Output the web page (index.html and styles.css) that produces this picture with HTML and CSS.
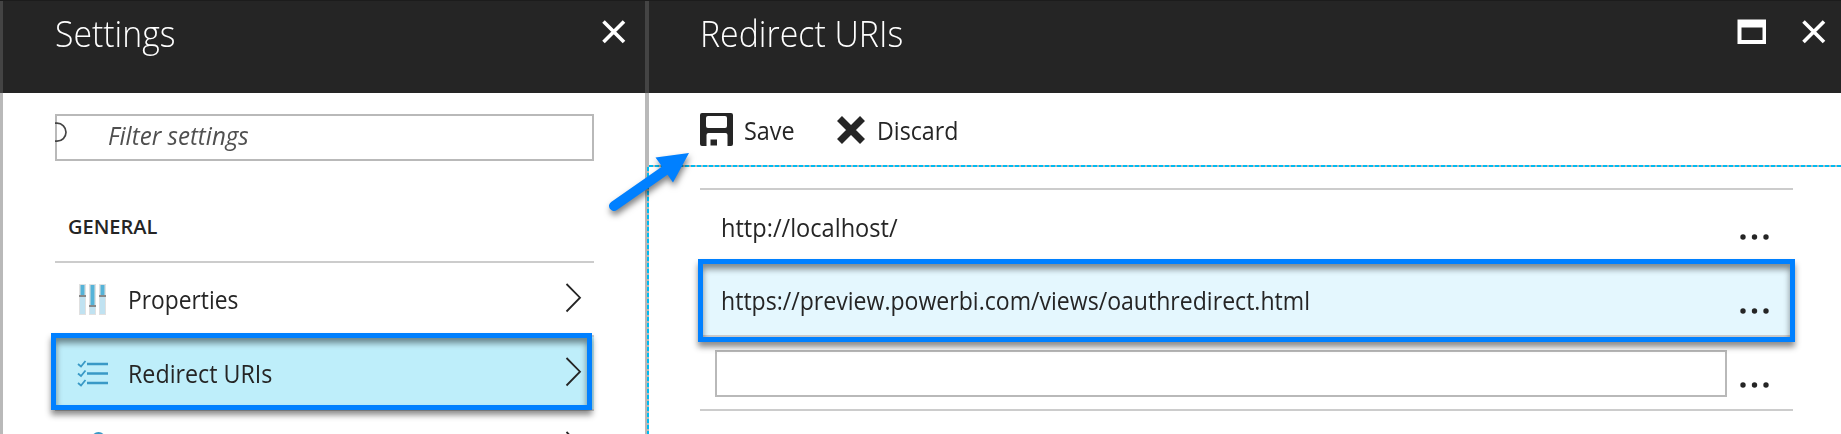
FILE: index.html
```html
<!DOCTYPE html>
<html lang="en">
<head>
<meta charset="utf-8">
<title>Redirect URIs</title>
<link rel="stylesheet" href="styles.css">
</head>
<body>
<div class="portal">
  <section class="blade blade-settings">
    <header class="blade-header">
      <h1 class="title t-settings">Settings</h1>
      <svg class="close" width="26" height="26" viewBox="0 0 26 26"><path d="M2.5 2.5L23 23M23 2.5L2.5 23"/></svg>
    </header>
    <div class="settings-body">
      <div class="filter">
        <svg class="lens" width="14" height="24" viewBox="0 0 14 24"><path d="M0 1.200H2A9 9 0 0 1 2 19.200H0"/></svg>
        <span class="t-filter">Filter settings</span>
      </div>
      <h2 class="group"><span class="t-general">GENERAL</span></h2>
      <div class="item">
        <svg class="icon sliders" width="32" height="32" viewBox="0 0 32 32">
          <path fill="#e0e0e0" d="M2 0h7v31H2zM12 0h7v31h-7zM22 0h7v31h-7z"/>
          <path fill="#c0e2f1" d="M3 13h5v17H3zM13 23h5v7h-5zM23 13h5v17h-5z"/>
          <path fill="#55b3d8" d="M3.500 1h4v11h-4zM13.500 1h4v21h-4zM23.500 1h4v11h-4z"/>
          <path fill="#888" d="M2 11h7v2H2zM12 21h7v2h-7zM22 11h7v2h-7z"/>
        </svg>
        <span class="label t-properties">Properties</span>
        <svg class="chevron" width="17" height="30" viewBox="0 0 17 30"><path d="M1.500 1L15 14.700L1.500 28.500"/></svg>
      </div>
      <div class="item selected">
        <svg class="icon" width="32" height="32" viewBox="0 0 32 32">
          <path class="lines" d="M10 7H31M10 16.500H31M10 26H31"/>
          <path class="checks" d="M1 7L4 9.500L8.500 4M1 16.500L4 19L8.500 13.500M1 26L4 28.500L8.500 23"/>
        </svg>
        <span class="label t-redirect">Redirect URIs</span>
        <svg class="chevron" width="17" height="30" viewBox="0 0 17 30"><path d="M1.500 1L15 14.700L1.500 28.500"/></svg>
      </div>
      <div class="item next">
        <svg class="icon" width="32" height="32" viewBox="0 0 32 32"><circle cx="21.500" cy="8" r="7" fill="#3999c6"/></svg>
        <svg class="chevron" width="17" height="30" viewBox="0 0 17 30"><path d="M1.500 1L15 14.700L1.500 28.500"/></svg>
      </div>
    </div>
  </section>
  <section class="blade blade-uris">
    <header class="blade-header">
      <h1 class="title t-uris">Redirect URIs</h1>
      <svg class="maximize" width="30" height="26" viewBox="0 0 30 26"><path fill-rule="evenodd" d="M.5.5h28.500V25H.5zM4.500 8.500V21h21V8.500z"/></svg>
      <svg class="close" width="26" height="26" viewBox="0 0 26 26"><path d="M2.500 2.500L23 23M23 2.500L2.500 23"/></svg>
    </header>
    <div class="toolbar">
      <svg width="33" height="33" viewBox="0 0 33 33"><path fill="#252525" fill-rule="evenodd" d="M2 0H31Q33 0 33 2V31Q33 33 31 33H27.500V22Q27.500 20 25.500 20H8.500Q6.500 20 6.500 22V33H2Q0 33 0 31V2Q0 0 2 0ZM8 3Q6 3 6 5V13Q6 15 8 15H25Q27 15 27 13V5Q27 3 25 3ZM10.500 26.500H17V32.500H10.500Z"/></svg>
      <span class="t-save">Save</span>
      <svg class="discard" width="28" height="28" viewBox="0 0 28 28"><path d="M2.500 2.500L25.500 25.500M25.500 2.500L2.500 25.500"/></svg>
      <span class="t-discard">Discard</span>
    </div>
    <div class="content">
      <svg class="focus" width="1194" height="270" viewBox="0 0 1194 270"><path class="focus-base" d="M1 270V1H1194"/><path class="focus-dash" d="M1 270V1H1194"/></svg>
      <div class="uris">
        <div class="uri"><span class="t-local">http://localhost/</span><svg class="dots" width="30" height="8"><circle cx="4" cy="4" r="2.700"/><circle cx="15.500" cy="4" r="2.700"/><circle cx="27" cy="4" r="2.700"/></svg></div>
        <div class="uri current"><span class="t-preview">https://preview.powerbi.com/views/oauthredirect.html</span><svg class="dots" width="30" height="8"><circle cx="4" cy="4" r="2.700"/><circle cx="15.500" cy="4" r="2.700"/><circle cx="27" cy="4" r="2.700"/></svg></div>
        <div class="uri entry"><div class="field"></div><svg class="dots" width="30" height="8"><circle cx="4" cy="4" r="2.700"/><circle cx="15.500" cy="4" r="2.700"/><circle cx="27" cy="4" r="2.700"/></svg></div>
      </div>
    </div>
  </section>
  <div class="callout callout-setting"></div>
  <div class="callout callout-uri"></div>
  <svg class="arrow" width="110" height="80" viewBox="0 0 110 80"><path class="shaft" d="M14 66L70 27"/><path class="head" d="M89 13L55.500 17.500L62 26.500L67 34L73 42.500Z"/></svg>
</div>
</body>
</html>
```
FILE: styles.css
```css
* { box-sizing: border-box; }
body { margin: 0; background: #fff; color: #252525; font-family: "Open Sans", "Noto Sans", sans-serif; font-size: 25px; }
svg { display: block; flex: none; }
span, h1 { white-space: nowrap; transform-origin: 0 50%; }
h1, h2 { margin: 0; font-weight: 400; }
/* Condensed text widths */
.t-settings { transform: scaleX(.913); }
.t-uris { transform: scaleX(.915); }
.t-filter { transform: scaleX(.965); }
.t-properties { transform: scaleX(.912); }
.t-redirect { transform: scaleX(.93); }
.t-save { transform: scaleX(.935); }
.t-discard { transform: scaleX(.928); }
.t-local { transform: scaleX(.943); }
.t-preview { transform: scaleX(.923); }
.portal { position: relative; display: flex; width: 1841px; height: 434px; overflow: hidden; }
.blade { height: 434px; border-left: 3px solid #b9b9b9; }
.blade-settings { width: 645px; }
.blade-uris { width: 1196px; border-left-width: 4px; }
.blade-header { display: flex; align-items: flex-start; height: 93px; margin-left: -3px; padding: 18px 18px 0 55px; background: #252525; border-top: 1px solid #1c1c1c; box-shadow: inset 3px 0 #444; color: #fff; }
.blade-uris .blade-header { margin-left: -4px; padding: 18px 14px 0 55px; box-shadow: inset 4px 0 #444; }
.title { margin-right: auto; margin-top: -11px; font-size: 37px; font-weight: 300; line-height: 50px; }
.close path { fill: none; stroke: #fff; stroke-width: 3.6; }
.maximize { margin: 0 34px 0 0; fill: #fff; }
.settings-body { padding: 21px 51px 0 52px; }
.filter { display: flex; align-items: center; height: 47px; border: 2px solid #b9b9b9; color: #505050; font-style: italic; line-height: 40px; }
.filter .t-filter { margin-top: -5px; }
.lens { width: 14px; margin: -8px 39px 0 -2px; }
.lens path { fill: none; stroke: #444; stroke-width: 1.700; }
.group { display: flex; height: 102px; border-bottom: 2px solid #ccc; padding: 52px 0 0 13px; font-size: 20px; font-weight: 600; line-height: 28px; }
.item { display: flex; align-items: center; height: 74px; padding: 0 12px 0 22px; border-bottom: 2px solid #ccc; }
.icon { margin-right: 19px; }
.sliders { margin-top: 2px; }
.label { line-height: 36px; }
.chevron { margin-left: auto; margin-top: -2px; }
.chevron path { fill: none; stroke: #252525; stroke-width: 1.800; }
.selected { background: #beeefa; }
.lines { fill: none; stroke: #3999c6; stroke-width: 2.600; }
.checks { fill: none; stroke: #3999c6; stroke-width: 1.800; }
.toolbar { display: flex; align-items: center; height: 72px; padding: 1px 0 0 51px; }
.toolbar .t-save { margin-left: 11px; width: 93px; }
.discard path { stroke: #252525; stroke-width: 7; }
.toolbar .t-discard { margin-left: 12px; }
.content { position: relative; height: 269px; padding: 23px 48px 0 51px; }
.focus { position: absolute; left: -2px; top: 0; }
.focus path { fill: none; stroke-width: 2; }
.focus .focus-base { stroke: #b9b9b9; }
.focus .focus-dash { stroke: #00bcf2; stroke-dasharray: 4 2; }
.uris { border-top: 2px solid #ccc; }
.uri { display: flex; align-items: center; justify-content: space-between; height: 74px; padding: 0 24px 0 21px; }
.dots { margin-top: 19px; fill: #252525; }
.uri.current { height: 73px; background: #e4f7fe; border-bottom: 2px solid #ccc; }
.uri.current .dots { margin-top: 22px; }
.uri.entry { height: 74px; padding: 1px 24px 0 15px; border-bottom: 2px solid #ccc; }
.uri.entry .dots { margin-top: 22px; }
.field { width: 1012px; height: 47px; border: 2px solid #b9b9b9; }
.callout { position: absolute; border: 5px solid #0080ff; box-shadow: 0 5px 6px rgba(0,0,0,.45), inset 0 5px 6px rgba(0,0,0,.45); }
.callout-setting { left: 51px; top: 333px; width: 541px; height: 77px; }
.callout-uri { left: 698px; top: 259px; width: 1097px; height: 83px; }
.arrow { position: absolute; left: 600px; top: 140px; filter: drop-shadow(1px 4px 3px rgba(0,0,0,.5)); }
.shaft { stroke: #0080ff; stroke-width: 10; stroke-linecap: round; }
.head { fill: #0080ff; }
```
